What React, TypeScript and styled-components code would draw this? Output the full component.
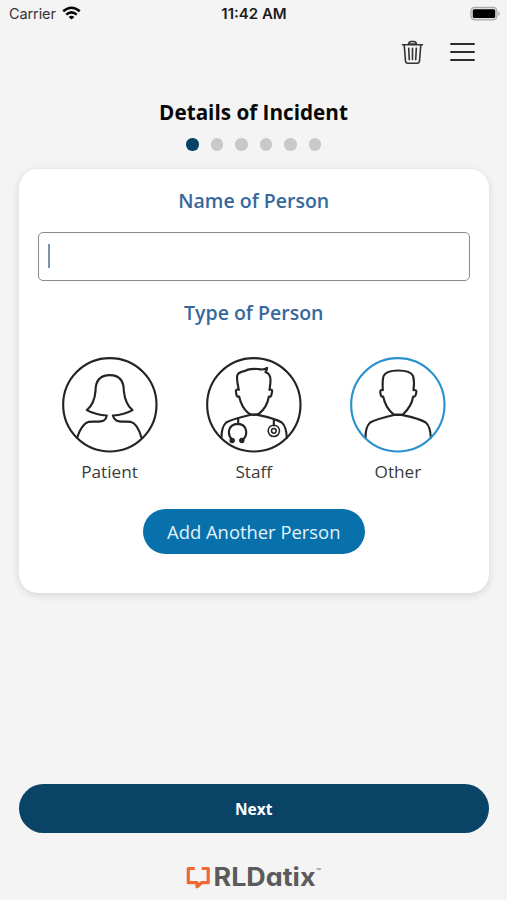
import React from "react";
import styled, { createGlobalStyle } from "styled-components";

const GlobalStyle = createGlobalStyle`
  * { box-sizing: border-box; }
  body { margin: 0; background: #f4f4f4; font-family: "Open Sans", sans-serif; }
`;

const Screen = styled.main`
  display: flex;
  flex-direction: column;
  width: 507px;
  height: 900px;
  overflow: hidden;
  background: #f4f4f4;
`;

const StatusBar = styled.header`
  display: grid;
  grid-template-columns: 1fr auto 1fr;
  align-items: center;
  height: 27px;
  padding: 0 6px 0 9px;
  font-family: Inter, sans-serif;
  color: #1c1c1c;
`;

const Carrier = styled.div`
  display: flex;
  align-items: center;
  gap: 6px;
  font-size: 14.5px;
  letter-spacing: -0.1px;
  color: #333;
`;

const Clock = styled.time`
  font-size: 15px;
  font-weight: 600;
  transform: translateX(-1px);
`;

const BatterySlot = styled.div`
  display: flex;
  justify-content: flex-end;
`;

const Toolbar = styled.nav`
  display: flex;
  justify-content: flex-end;
  align-items: center;
  gap: 26px;
  height: 49px;
  padding-right: 32px;
`;

const IconButton = styled.button`
  display: flex;
  padding: 0;
  border: 0;
  background: none;
`;

const Title = styled.h1`
  margin: 22px 0 0;
  font-size: 20.7px;
  line-height: 28px;
  font-weight: 700;
  text-align: center;
  color: #080808;
`;

const Steps = styled.div`
  display: flex;
  justify-content: center;
  gap: 12px;
  margin-top: 12px;
`;

const Step = styled.span<{ $active?: boolean }>`
  width: 12.5px;
  height: 12.5px;
  border-radius: 50%;
  background: ${(p) => (p.$active ? "#084266" : "#c9c9c9")};
`;

const Card = styled.section`
  display: flex;
  flex-direction: column;
  align-items: center;
  height: 424px;
  margin: 18px 18.5px 0 19px;
  padding: 18px 18.5px 0;
  border-radius: 19px;
  background: #fff;
  box-shadow: 0 2px 8px rgba(0, 0, 0, 0.13);
`;

const Heading = styled.h2`
  margin: 0;
  font-size: 19.5px;
  line-height: 28px;
  font-weight: 600;
  color: #36689b;
`;

const NameField = styled.div`
  display: flex;
  align-items: center;
  width: 100%;
  height: 49px;
  margin: 17px 0 18px;
  padding-left: 9px;
  border: 1.5px solid #8b8b8b;
  border-radius: 5px;
`;

const Caret = styled.span`
  width: 2px;
  height: 24px;
  background: #7894ad;
`;

const People = styled.div`
  display: grid;
  grid-template-columns: repeat(3, 1fr);
  width: 100%;
  margin-top: 30px;
`;

const PersonOption = styled.div`
  display: flex;
  flex-direction: column;
  align-items: center;
  gap: 6px;
  font-size: 17.2px;
  line-height: 26px;
  color: #3b3b3b;
`;

const Portrait = styled.svg<{ $selected?: boolean }>`
  width: 96px;
  height: 96px;
  overflow: visible;
  fill: none;
  stroke: #242424;
  stroke-width: 6.4;
  stroke-linecap: round;
  stroke-linejoin: round;
  circle.frame { stroke: ${(p) => (p.$selected ? "#2a91cf" : "#242424")}; }
`;

const AddButton = styled.button`
  width: 222.5px;
  height: 44.5px;
  margin-top: 24.5px;
  padding: 0;
  border: 0;
  border-radius: 23px;
  background: #0870aa;
  color: #e2f3fd;
  font: 400 18.4px "Open Sans", sans-serif;
`;

const NextButton = styled.button`
  height: 49px;
  margin: 191.5px 18.5px 0 19px;
  border: 0;
  border-radius: 25px;
  background: #094366;
  color: #fff;
  font: 700 15.5px "Open Sans", sans-serif;
`;

const Brand = styled.footer`
  display: flex;
  justify-content: center;
  margin-top: 29px;
`;

const Frame = () => <circle className="frame" cx="179" cy="178" r="140" />;

const shoulders =
  "M82 277C82 254 87 239 96 231C111 222 143 214 164 209Q179 205 194 209C217 214 248 222 263 231C272 239 277 254 278 277";

function PatientIcon() {
  return (
    <Portrait viewBox="35.5 34.5 288 288">
      <Frame />
      <path d="M81 277C88 251 103 232 116 229C130 227 150 231 161 225Q169 219 170 210C150 209 128 204 110 194C124 182 134 164 136 137C136 109 147 89 179 89C211 89 221 109 221 137C224 164 232 182 247 194C230 204 208 209 188 210Q190 219 199 225C209 231 229 227 241 229C256 233 267 251 274 277" />
    </Portrait>
  );
}

function StaffIcon() {
  return (
    <Portrait viewBox="35.5 34.5 288 288">
      <Frame />
      <path d="M134 133C131 119 127 104 129 91C130 81 142 78 153 76C166 68 179 70 194 71C204 73 212 72 219 67Q219 73 214 80C226 83 229 91 229 104C229 115 227 125 226 133Q234 130 234 138L231 151Q229 155 224 153C221 173 208 194 194 205Q179 211 165 205C151 194 139 173 135 153Q129 155 127 149L125 138Q125 130 134 133Z" />
      <path d={shoulders} />
      <path d="M132 218V234M115 284C98 268 100 236 131 235C160 236 163 270 144 284M239 222V240" />
      <circle cx="114" cy="285" r="5" fill="#242424" />
      <circle cx="143" cy="285" r="5" fill="#242424" />
      <Diaphragm cx="239" cy="256" r="17" />
      <Diaphragm cx="239" cy="256" r="7" />
    </Portrait>
  );
}

const Diaphragm = styled.circle`
  stroke-width: 4.6;
`;

function OtherIcon() {
  return (
    <Portrait viewBox="35.5 34.5 288 288" $selected>
      <path d="M134 134C133 119 133 103 136 92C142 79 158 75 180 75C202 75 219 79 225 92C228 104 228 119 226 134Q234 132 235 139L232 150Q229 155 225 153C222 173 209 193 195 206Q180 211 165 206C150 193 139 173 135 153Q129 154 128 149L126 139Q127 131 134 134Z" />
      <path d={shoulders} />
      <Frame />
    </Portrait>
  );
}

function WifiIcon() {
  return (
    <svg width="19" height="15" viewBox="0 0 19 15" fill="none" stroke="#080808" strokeWidth="2.5">
      <path d="M1.2 5.2Q9.5-1.8 17.8 5.2M4.2 8.6Q9.5 4.2 14.8 8.6" />
      <path d="M9.5 13.6L6.6 10.9Q9.5 8.4 12.4 10.9Z" fill="#080808" stroke="none" />
    </svg>
  );
}

function BatteryIcon() {
  return (
    <svg width="31" height="16" viewBox="0 0 31 16">
      <rect x="0.9" y="1.3" width="26" height="12.6" rx="3.8" fill="#ddd" stroke="#aaa" strokeWidth="1.2" />
      <rect x="2.8" y="3.2" width="22.4" height="8.8" rx="1.5" fill="#000" />
      <path d="M28.4 5.4Q31 7.5 28.4 9.9Z" fill="#999" />
    </svg>
  );
}

function TrashIcon() {
  return (
    <svg width="23" height="25" viewBox="-0.5 -1 23 25" fill="none" stroke="#333" strokeWidth="1.6" strokeLinecap="round">
      <path d="M1 4.8H21M7 4.5Q7.3 1.5 9.8 1.5H12.2Q14.7 1.5 15 4.5M2.7 5L4 21Q4.2 23.2 6.3 23.2H15.7Q17.8 23.2 18 21L19.3 5M7.2 8.3L7.8 19.6M11 8.3V19.6M14.8 8.3L14.2 19.6" />
      <path d="M7.5 3.8H14.5" strokeWidth="1.2" />
    </svg>
  );
}

function MenuIcon() {
  return (
    <svg width="25" height="20" viewBox="0 0 25 20" stroke="#2b2b2b" strokeWidth="2.2">
      <path d="M0.3 2H24.7M0.3 10H24.7M0.3 18H24.7" />
    </svg>
  );
}

const Wordmark = styled.text`
  font: 700 25px Inter, sans-serif;
  font-feature-settings: "cv11" 1;
  fill: #5b5b5b;
`;

function BrandLogo() {
  return (
    <svg width="138" height="32" viewBox="0 0 138 32" overflow="visible" role="img" aria-label="RLDatix">
      <path
        d="M9.8 6.5H3.3V20.7H12V24.8L16.6 20.7H23.2V6.5H16.8"
        fill="none"
        stroke="#ed692f"
        strokeWidth="3.2"
        strokeLinejoin="round"
      />
      <Wordmark x="28.5" y="24" textLength="102" lengthAdjust="spacingAndGlyphs">RLDatix</Wordmark>
      <text x="131" y="11.5" fontFamily="Inter, sans-serif" fontSize="8" fill="#666">™</text>
    </svg>
  );
}

export default function App() {
  return (
    <Screen>
      <GlobalStyle />
      <StatusBar>
        <Carrier>Carrier<WifiIcon /></Carrier>
        <Clock>11:42 AM</Clock>
        <BatterySlot><BatteryIcon /></BatterySlot>
      </StatusBar>
      <Toolbar>
        <IconButton aria-label="Delete"><TrashIcon /></IconButton>
        <IconButton aria-label="Menu"><MenuIcon /></IconButton>
      </Toolbar>
      <Title>Details of Incident</Title>
      <Steps>
        {[0, 1, 2, 3, 4, 5].map((step) => <Step key={step} $active={step === 0} />)}
      </Steps>
      <Card>
        <Heading>Name of Person</Heading>
        <NameField><Caret /></NameField>
        <Heading>Type of Person</Heading>
        <People>
          <PersonOption><PatientIcon />Patient</PersonOption>
          <PersonOption><StaffIcon />Staff</PersonOption>
          <PersonOption><OtherIcon />Other</PersonOption>
        </People>
        <AddButton>Add Another Person</AddButton>
      </Card>
      <NextButton>Next</NextButton>
      <Brand><BrandLogo /></Brand>
    </Screen>
  );
}
